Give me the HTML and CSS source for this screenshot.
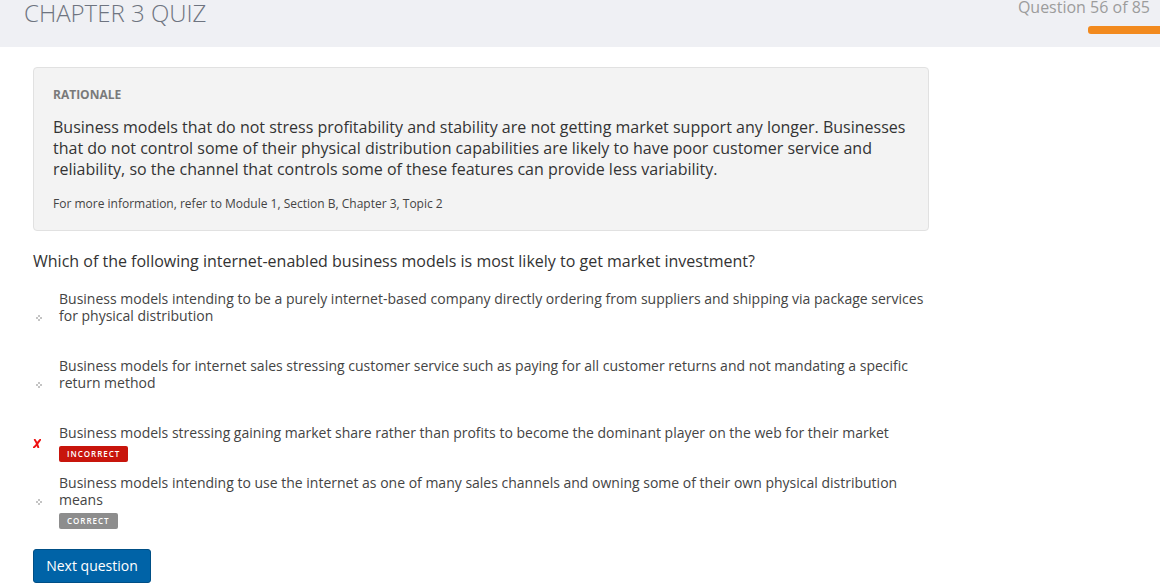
FILE: index.html
```html
<!DOCTYPE html>
<html lang="en">
<head>
<meta charset="utf-8">
<title>Chapter 3 Quiz</title>
<link rel="stylesheet" href="styles.css">
</head>
<body>
<header class="topbar">
  <h1 class="quiz-title">CHAPTER 3 QUIZ</h1>
  <div class="progress">
    <div class="progress-text">Question 56 of 85</div>
    <div class="progress-bar"></div>
  </div>
</header>
<main class="content">
  <section class="rationale">
    <div class="rationale-label">RATIONALE</div>
    <p class="rationale-text">Business models that do not stress profitability and stability are not getting market support any longer. Businesses that do not control some of their physical distribution capabilities are likely to have poor customer service and reliability, so the channel that controls some of these features can provide less variability.</p>
    <p class="rationale-ref">For more information, refer to Module 1, Section B, Chapter 3, Topic 2</p>
  </section>
  <h2 class="question">Which of the following internet-enabled business models is most likely to get market investment?</h2>
  <ul class="options">
    <li class="option">
      <span class="opt-icon"><svg width="6" height="6" viewBox="0 0 6 6"><rect x="2" y="0" width="2" height="2" fill="#c4c4c4"/><rect x="0" y="2" width="2" height="2" fill="#c4c4c4"/><rect x="4" y="2" width="2" height="2" fill="#c4c4c4"/><rect x="2" y="4" width="2" height="2" fill="#c4c4c4"/></svg></span>
      <div class="opt-body">
        <div class="opt-text">Business models intending to be a purely internet-based company directly ordering from suppliers and shipping via package services for physical distribution</div>
        <div class="badge-slot"></div>
      </div>
    </li>
    <li class="option">
      <span class="opt-icon"><svg width="6" height="6" viewBox="0 0 6 6"><rect x="2" y="0" width="2" height="2" fill="#c4c4c4"/><rect x="0" y="2" width="2" height="2" fill="#c4c4c4"/><rect x="4" y="2" width="2" height="2" fill="#c4c4c4"/><rect x="2" y="4" width="2" height="2" fill="#c4c4c4"/></svg></span>
      <div class="opt-body">
        <div class="opt-text">Business models for internet sales stressing customer service such as paying for all customer returns and not mandating a specific return method</div>
        <div class="badge-slot"></div>
      </div>
    </li>
    <li class="option">
      <span class="opt-icon opt-icon-x"><svg width="8" height="9" viewBox="0 0 8 9"><path d="M1.8 0.8 Q3.2 3 3.9 4.6 Q5.6 2.4 7.4 0.6 M6.9 1.2 Q4.6 4.4 3.2 6.2 Q1.9 7.8 0.6 8.5 M3.9 4.6 Q4.6 6.4 5.3 8.3" stroke="#ee1111" stroke-width="1.9" fill="none" stroke-linecap="round"/></svg></span>
      <div class="opt-body">
        <div class="opt-text">Business models stressing gaining market share rather than profits to become the dominant player on the web for their market</div>
        <div class="badge-slot"><span class="badge badge-incorrect">INCORRECT</span></div>
      </div>
    </li>
    <li class="option">
      <span class="opt-icon"><svg width="6" height="6" viewBox="0 0 6 6"><rect x="2" y="0" width="2" height="2" fill="#c4c4c4"/><rect x="0" y="2" width="2" height="2" fill="#c4c4c4"/><rect x="4" y="2" width="2" height="2" fill="#c4c4c4"/><rect x="2" y="4" width="2" height="2" fill="#c4c4c4"/></svg></span>
      <div class="opt-body">
        <div class="opt-text">Business models intending to use the internet as one of many sales channels and owning some of their own physical distribution means</div>
        <div class="badge-slot"><span class="badge badge-correct">CORRECT</span></div>
      </div>
    </li>
  </ul>
  <button class="next-btn" type="button">Next question</button>
</main>
</body>
</html>
```
FILE: styles.css
```css
* { box-sizing: border-box; }
html, body { margin: 0; padding: 0; }
body {
  font-family: "Open Sans", "Liberation Sans", sans-serif;
  color: #333;
  background: #fff;
  width: 1160px;
  height: 585px;
  overflow: hidden;
}
.topbar {
  height: 47px;
  background: #eff0f4;
  display: flex;
  justify-content: space-between;
  align-items: flex-start;
  padding-left: 24px;
}
.quiz-title {
  margin: -4px 0 0;
  font-size: 24px;
  line-height: 33px;
  font-weight: 300;
  color: #6e7480;
  letter-spacing: 0;
}
.progress {
  display: flex;
  flex-direction: column;
  align-items: flex-end;
}
.progress-text {
  margin: -4px 10px 0 0;
  font-size: 16px;
  line-height: 22px;
  color: #9c9c9c;
}
.progress-bar {
  margin-top: 8px;
  width: 72px;
  height: 8px;
  background: #f28a1e;
  border-radius: 3px 0 0 3px;
}
.content {
  padding: 20px 0 0 33px;
}
.rationale {
  width: 896px;
  background: #f3f3f3;
  border: 1px solid #e1e1e1;
  border-radius: 4px;
  padding: 19px 19px 18px 19px;
}
.rationale-label {
  font-size: 12px;
  line-height: 16px;
  font-weight: 700;
  color: #7a7a7a;
}
.rationale-text {
  margin: 14px 0 0;
  font-size: 16px;
  line-height: 21px;
  color: #333;
}
.rationale-ref {
  margin: 16px 0 0;
  font-size: 12px;
  line-height: 16px;
  color: #444;
}
.question {
  margin: 20px 0 0;
  font-size: 16px;
  line-height: 21px;
  font-weight: 400;
  color: #333;
}
.options {
  list-style: none;
  margin: 18px 0 0;
  padding: 0;
  width: 896px;
}
.option {
  display: flex;
  align-items: center;
  margin-bottom: 12px;
}
.opt-icon {
  width: 26px;
  flex: none;
  display: flex;
  justify-content: flex-start;
  padding-left: 3px;
}
.opt-icon-x {
  padding-left: 0;
  padding-top: 1px;
}
.opt-body { flex: 1; }
.opt-text {
  font-size: 14px;
  line-height: 17px;
  color: #444;
}
.badge-slot {
  height: 16px;
  margin-top: 5px;
}
.badge {
  display: inline-block;
  height: 16px;
  line-height: 16px;
  padding: 0 8px;
  font-size: 8px;
  font-weight: 600;
  letter-spacing: 1px;
  color: #fff;
  border-radius: 2px;
  vertical-align: top;
}
.badge-incorrect { background: #c8150c; }
.badge-correct { background: #8d8d8d; }
.next-btn {
  margin-top: 8px;
  width: 118px;
  height: 34px;
  padding: 0 0 1px;
  font-family: "Open Sans", "Liberation Sans", sans-serif;
  font-size: 14px;
  line-height: 18px;
  color: #fff;
  background: #0063a7;
  border: 1px solid #004f86;
  border-radius: 3px;
}
```
